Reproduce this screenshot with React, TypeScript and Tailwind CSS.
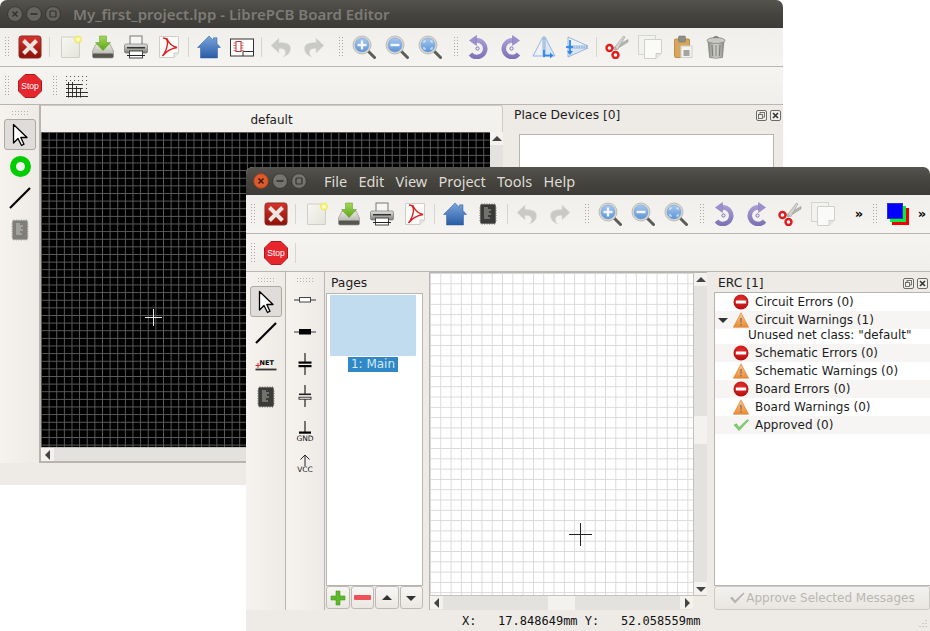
import React from "react";

type P = { children?: React.ReactNode; className?: string };

const Svg = ({ children, s = 24, className = "" }: P & { s?: number }) => (
  <svg width={s} height={s} viewBox="0 0 24 24" className={"block shrink-0 " + className}>
    {children}
  </svg>
);

const Defs = () => (
  <svg width="0" height="0" className="absolute">
    <defs>
      <linearGradient id="gRed" x1="0" y1="0" x2="0" y2="1"><stop offset="0" stopColor="#d8342c" /><stop offset="1" stopColor="#8c1008" /></linearGradient>
      <linearGradient id="gPage" x1="0" y1="0" x2="1" y2="1"><stop offset="0" stopColor="#f8f8f2" /><stop offset="1" stopColor="#e4e4dc" /></linearGradient>
      <linearGradient id="gHome" x1="0" y1="0" x2="0" y2="1"><stop offset="0" stopColor="#7aa6dc" /><stop offset="1" stopColor="#2a5ca6" /></linearGradient>
      <linearGradient id="gLens" x1="0" y1="0" x2="0" y2="1"><stop offset="0" stopColor="#a8c8ee" /><stop offset="1" stopColor="#5c94d8" /></linearGradient>
      <linearGradient id="gDisk" x1="0" y1="0" x2="0" y2="1"><stop offset="0" stopColor="#e8e8e0" /><stop offset="1" stopColor="#a8a8a0" /></linearGradient>
      <linearGradient id="gArrow" x1="0" y1="0" x2="0" y2="1"><stop offset="0" stopColor="#a4d85c" /><stop offset="1" stopColor="#5aa612" /></linearGradient>
      <linearGradient id="gPrint" x1="0" y1="0" x2="0" y2="1"><stop offset="0" stopColor="#e4e4e0" /><stop offset="1" stopColor="#7c7c78" /></linearGradient>
      <linearGradient id="gPurple" gradientUnits="userSpaceOnUse" x1="0" y1="3" x2="0" y2="24"><stop offset="0" stopColor="#a9a0d6" /><stop offset="1" stopColor="#7a70b4" /></linearGradient>
      <linearGradient id="gTrash" x1="0" y1="0" x2="1" y2="0"><stop offset="0" stopColor="#8c8c88" /><stop offset="0.5" stopColor="#d4d4d0" /><stop offset="1" stopColor="#8c8c88" /></linearGradient>
      <linearGradient id="gWarn" x1="0" y1="0" x2="0" y2="1"><stop offset="0" stopColor="#f8c890" /><stop offset="1" stopColor="#ea8a34" /></linearGradient>
      <radialGradient id="gErr" cx="0.5" cy="0.35" r="0.7"><stop offset="0" stopColor="#e83030" /><stop offset="1" stopColor="#b00a0a" /></radialGradient>
    </defs>
  </svg>
);

const Close = () => (
  <Svg>
    <rect x="1" y="1" width="22" height="22" rx="2.5" fill="url(#gRed)" stroke="#8a2a20" />
    <path d="M5.5 5.5L18.5 18.5M18.5 5.5L5.5 18.5" stroke="#ece6e2" strokeWidth="4" />
  </Svg>
);
const NewDoc = () => (
  <Svg>
    <rect x="3.5" y="2" width="18" height="20.5" rx="0.5" fill="url(#gPage)" stroke="#cfcfc6" />
    <circle cx="20" cy="4.5" r="3.4" fill="#fff57a" stroke="#e8e860" />
    <circle cx="20" cy="4.5" r="1.6" fill="#ffffe0" />
  </Svg>
);
const SaveIco = () => (
  <Svg>
    <path d="M1.5 16L5 9H19L22.5 16V21Q22.5 23 21 23H3Q1.5 23 1.5 21Z" fill="url(#gDisk)" stroke="#8c8c84" strokeWidth="0.6" />
    <rect x="1.8" y="18.5" width="20.4" height="4.2" rx="1" fill="#55564f" />
    <path d="M8.5 1H15.5V7.5H19.5L12 15.5L4.5 7.5H8.5Z" fill="url(#gArrow)" stroke="#5c9a20" strokeWidth="0.5" />
  </Svg>
);
const PrintIco = () => (
  <Svg>
    <rect x="6" y="1" width="12" height="9" fill="#f6f6f4" stroke="#777" />
    <rect x="0.5" y="9" width="23" height="9" rx="1.5" fill="url(#gPrint)" stroke="#666" strokeWidth="0.6" />
    <rect x="3" y="12" width="18" height="1.5" fill="#333" />
    <rect x="5.5" y="16" width="13" height="7" fill="#fff" stroke="#444" />
    <rect x="3" y="20" width="18" height="1" fill="#222" />
  </Svg>
);
const PdfIco = () => (
  <Svg>
    <path d="M2.5 1.5H21.5V18L17 22.5H2.5Z" fill="#fbfbf9" stroke="#cfcfca" />
    <path d="M17 22.5V18H21.5" fill="#e6e6e2" stroke="#cfcfca" />
    <path d="M6 3Q11 3 10.5 9Q9.5 16 5.5 21Q11 14 20 12.5Q13 11 9.5 3" fill="none" stroke="#dc2020" strokeWidth="1.4" />
  </Svg>
);
const HomeIco = () => (
  <Svg>
    <path d="M12 1L16.5 5.2V2.8H20V8.5L23.5 12.5H20.5V23H3.5V12.5H0.5Z" fill="url(#gHome)" stroke="#2c5a9c" strokeWidth="0.5" />
  </Svg>
);
const BoardIco = () => (
  <Svg>
    <rect x="0.5" y="4" width="23" height="17" fill="#fff" stroke="#333" />
    <path d="M13 21V16.5H23.5" fill="none" stroke="#333" />
    <rect x="6" y="6.5" width="5" height="10" fill="#fff" stroke="#b33" />
    <path d="M3.5 8H6M3.5 10.5H6M3.5 13H6M3.5 15.5H6M11 8H13.5M11 10.5H13.5M11 13H13.5M11 15.5H13.5" stroke="#c44" strokeWidth="0.8" />
  </Svg>
);
const ChipIco = ({ gray }: { gray?: boolean }) => {
  const body = gray ? "#7e7e7a" : "#3a3b38";
  const pin = gray ? "#c4c4c0" : "#9a9a96";
  const txt = gray ? "#c4c4c0" : "#a8a8a4";
  const pins = [5, 7.5, 10, 12.5, 15, 17.5];
  return (
    <Svg>
      {pins.map((v) => (
        <g key={v}>
          <path d={`M3 ${v + 1}H21`} stroke={pin} strokeWidth="0.8" />
          <path d={`M${v + 1} 1V23`} stroke={pin} strokeWidth="0.8" />
        </g>
      ))}
      <rect x="4.5" y="2.5" width="15" height="19" rx="1" fill={body} stroke={gray ? "#9a9a96" : "#555"} strokeWidth="0.6" />
      <path d="M8 6H12M8 8H15M8 10H13M8 12H15M8 14H12M8 16H14" stroke={txt} strokeWidth="1" />
    </Svg>
  );
};
const UndoIco = ({ flip }: { flip?: boolean }) => (
  <Svg>
    <g transform={flip ? "translate(24,0) scale(-1,1)" : undefined}>
      <path d="M10 3L2 10.5L10 18V13.5C15 13.5 16.5 15 16.5 17.5C16.5 19.5 15.5 21 14 22C19.5 20.5 21.5 17 21.5 13.5C21.5 9 17.5 7.5 10 7.5Z" fill="#c9c9c5" stroke="#dcdcd8" strokeWidth="0.5" />
    </g>
  </Svg>
);
const Zoom = ({ kind }: { kind: "in" | "out" | "all" }) => (
  <Svg>
    <path d="M15.5 15.5L22.5 22.5" stroke="#5c5c58" strokeWidth="3" strokeLinecap="round" />
    <circle cx="10" cy="10" r="9" fill="#dadad4" stroke="#bcbcb6" />
    <circle cx="10" cy="10" r="7" fill="url(#gLens)" stroke="#6f9ad2" strokeWidth="0.5" />
    {kind !== "all" && <path d="M5.5 10H14.5" stroke="#f4f8fc" strokeWidth="2.4" />}
    {kind === "in" && <path d="M10 5.5V14.5" stroke="#f4f8fc" strokeWidth="2.4" />}
    {kind === "all" && (
      <path d="M6 8V6H8M12 6H14V8M14 12V14H12M8 14H6V12" fill="none" stroke="#dbe8f8" strokeWidth="1.2" />
    )}
  </Svg>
);
const RotIco = ({ cw }: { cw?: boolean }) => (
  <Svg>
    <g transform={cw ? "translate(24,0) scale(-1,1)" : undefined}>
      <path d="M9.5 5.5A8.3 8.3 0 1 1 4.5 19" fill="none" stroke="url(#gPurple)" strokeWidth="4.6" />
      <path d="M3.5 5.5L10.5 0.5V10.5Z" fill="#9a90cc" stroke="#8278bc" strokeWidth="0.5" />
      <circle cx="11.5" cy="13.5" r="1.6" fill="none" stroke="#7a70b4" strokeWidth="1" />
    </g>
  </Svg>
);
const MirrorIco = () => (
  <Svg>
    <path d="M11 2L1 21H11Z" fill="#eef2f6" stroke="#8cb0dc" strokeWidth="0.9" />
    <path d="M13 2L23 21H13Z" fill="#dbe6f2" stroke="#8cb0dc" strokeWidth="0.9" />
    <path d="M12 1V23" stroke="#5c98e0" strokeWidth="0.8" strokeDasharray="1.5 1" />
    <path d="M12 20.5H19" stroke="#2e88ea" strokeWidth="1.8" />
    <path d="M18 17.5L21.5 20.5L18 23.5Z" fill="#2e88ea" />
    <path d="M12 15V22" stroke="#2e88ea" strokeWidth="1.8" />
  </Svg>
);
const FlipIco = () => (
  <Svg>
    <path d="M3 2L23 11H3Z" fill="#eef2f6" stroke="#8cb0dc" strokeWidth="0.9" />
    <path d="M3 13L23 13L3 22Z" fill="#dbe6f2" stroke="#8cb0dc" strokeWidth="0.9" />
    <path d="M1 12H23" stroke="#5c98e0" strokeWidth="0.8" strokeDasharray="1.5 1" />
    <path d="M5 5V17" stroke="#2e88ea" strokeWidth="1.8" />
    <path d="M2 16L5 20L8 16Z" fill="#2e88ea" />
    <path d="M1 12H8" stroke="#2e88ea" strokeWidth="1.8" />
  </Svg>
);
const CutIco = () => (
  <Svg>
    <path d="M8 13L23 4.5L23 7L10 15Z" fill="#b8b8b4" stroke="#8c8c88" strokeWidth="0.5" />
    <path d="M10 12L18.5 1L20 2L12.5 15Z" fill="#d4d4d0" stroke="#8c8c88" strokeWidth="0.5" />
    <circle cx="4.5" cy="13" r="3" fill="#fff" stroke="#e01c1c" strokeWidth="2.4" />
    <circle cx="10.5" cy="20" r="3" fill="#fff" stroke="#e01c1c" strokeWidth="2.4" />
  </Svg>
);
const CopyIco = () => (
  <Svg>
    <rect x="0.5" y="0.5" width="17" height="19" fill="#f2f2ee" stroke="#d4d4d0" />
    <path d="M6.5 4.5H23.5V18L18 23.5H6.5Z" fill="#fafaf8" stroke="#cfcfcb" />
    <path d="M18 23.5V18.5H23.5" fill="#e4e4e0" stroke="#cfcfcb" />
  </Svg>
);
const PasteIco = () => (
  <Svg>
    <rect x="3.5" y="4" width="15" height="18.5" rx="1" fill="#d6a65e" stroke="#bb904c" />
    <rect x="7.5" y="1" width="7" height="6" rx="1" fill="#8e8e88" stroke="#6e6e68" strokeWidth="0.5" />
    <rect x="10" y="11" width="11" height="11.5" fill="#f2f2ee" stroke="#cfcfcb" />
    <rect x="12.5" y="15" width="6" height="6" fill="#a4a4a0" />
  </Svg>
);
const TrashIco = () => (
  <Svg>
    <path d="M4 6H20L18.5 22.5Q12 24 5.5 22.5Z" fill="url(#gTrash)" stroke="#77776f" strokeWidth="0.6" />
    <ellipse cx="12" cy="5.5" rx="9" ry="3" fill="#c8c8c4" stroke="#7c7c78" strokeWidth="0.7" />
    <path d="M9.5 3Q12 0.5 14.5 3" fill="none" stroke="#7c7c78" strokeWidth="1.2" />
    <path d="M8 10L8.7 21M12 10V21.5M16 10L15.3 21" stroke="#77776f" strokeWidth="0.9" />
  </Svg>
);
const StopIco = () => (
  <Svg>
    <polygon points="7,0.5 17,0.5 23.5,7 23.5,17 17,23.5 7,23.5 0.5,17 0.5,7" fill="#e6262c" stroke="#ad1c1c" />
    <text x="12" y="15" textAnchor="middle" fill="#fff" fontSize="8.6" fontFamily="'Liberation Sans',sans-serif">Stop</text>
  </Svg>
);
const GridIco = () => {
  const dots: React.ReactNode[] = [];
  for (let x = 0; x < 6; x++)
    for (let y = 0; y < 6; y++)
      dots.push(<rect key={`${x}-${y}`} x={1 + x * 4} y={2 + y * 4} width="1" height="1" fill="#555" />);
  return (
    <Svg>
      {dots}
      <path d="M1 10.5H17M1 14.5H17M1 18.5H23M1 22.5H23M3.5 8V23.5M7.5 8V23.5M11.5 12V23.5M15.5 14V23.5" stroke="#222" strokeWidth="0.9" fill="none" />
    </Svg>
  );
};
const Layers = () => (
  <div className="relative w-[22px] h-[22px]">
    <div className="absolute left-[5px] top-[5px] w-[17px] h-[17px] bg-[#f00000]" />
    <div className="absolute left-[3px] top-[3px] w-[16px] h-[16px] bg-[#00f040]" />
    <div className="absolute left-0 top-0 w-[16px] h-[16px] bg-[#0000ff] border border-[#3030c0]" />
  </div>
);
const CursorIco = () => (
  <Svg>
    <path d="M5.5 1.5V20L10 15.5L13.5 22.5L16 21.2L12.8 14.5H19Z" fill="#fff" stroke="#000" strokeWidth="1.3" strokeLinejoin="round" />
  </Svg>
);
const WireIco = () => (
  <Svg>
    <path d="M2 22L22 2" stroke="#000" strokeWidth="2.2" />
  </Svg>
);
const NetIco = () => (
  <div className="relative w-[24px] h-[24px]">
    <svg width="24" height="24" viewBox="0 0 24 24" className="absolute inset-0">
      <path d="M1.5 16.5H22.5" stroke="#333" strokeWidth="1.8" />
      <path d="M1.5 12.5H6.5M4 10V15" stroke="#e8202c" strokeWidth="1" />
    </svg>
    <span className="absolute left-[6px] top-[5px] font-['DejaVu_Sans',sans-serif] font-bold text-[6.5px] leading-[10px] text-black">NET</span>
  </div>
);
const ResIco = ({ fill }: { fill?: boolean }) => (
  <Svg>
    <path d="M1 12H23" stroke="#333" strokeWidth="1" />
    <rect x="6.5" y="9.5" width="11" height="4.5" fill={fill ? "#000" : "#fff"} stroke={fill ? "#000" : "#444"} />
  </Svg>
);
const CapIco = ({ pol }: { pol?: boolean }) => (
  <Svg>
    <path d="M12 1V10M12 14V23" stroke="#222" strokeWidth="1.2" />
    {pol ? (
      <>
        <rect x="6" y="9.5" width="12" height="1.6" fill="#222" />
        <rect x="6" y="13.2" width="12" height="2" fill="#fff" stroke="#222" strokeWidth="0.9" />
      </>
    ) : (
      <>
        <rect x="5.5" y="9.5" width="13" height="2.2" fill="#000" />
        <rect x="5.5" y="13" width="13" height="2.2" fill="#000" />
      </>
    )}
  </Svg>
);
const GndIco = () => (
  <div className="flex flex-col items-center">
    <svg width="14" height="14" viewBox="0 0 14 14" className="block">
      <path d="M7 0V11" stroke="#222" strokeWidth="1.2" />
      <rect x="1" y="10.5" width="12" height="2.2" fill="#000" />
    </svg>
    <span className="font-['DejaVu_Sans',sans-serif] text-[7.5px] leading-[8px] text-[#111]">GND</span>
  </div>
);
const VccIco = () => (
  <div className="flex flex-col items-center">
    <svg width="12" height="12" viewBox="0 0 12 12" className="block">
      <path d="M6 12V1M1.5 5.5L6 1L10.5 5.5" stroke="#222" strokeWidth="1" fill="none" />
    </svg>
    <span className="font-['DejaVu_Sans',sans-serif] text-[7.5px] leading-[7px] text-[#111]">VCC</span>
  </div>
);
const DockBtns = () => (
  <div className="flex gap-[3px] items-center">
    <svg width="11" height="11" viewBox="0 0 11 11" className="block">
      <rect x="0.5" y="0.5" width="10" height="10" rx="1.5" fill="#f2f0ec" stroke="#6a6a66" />
      <rect x="4" y="2.5" width="4.5" height="4.5" fill="none" stroke="#55554f" strokeWidth="0.8" />
      <rect x="2.5" y="4.5" width="4" height="4" fill="#f2f0ec" stroke="#55554f" strokeWidth="0.8" />
    </svg>
    <svg width="11" height="11" viewBox="0 0 11 11" className="block">
      <rect x="0.5" y="0.5" width="10" height="10" rx="1.5" fill="#f2f0ec" stroke="#6a6a66" />
      <path d="M3 3L8 8M8 3L3 8" stroke="#33332f" strokeWidth="1.6" />
    </svg>
  </div>
);
const ErrIco = () => (
  <svg width="16" height="16" viewBox="0 0 16 16" className="block">
    <circle cx="8" cy="8" r="7.5" fill="url(#gErr)" />
    <rect x="2.8" y="6.5" width="10.4" height="3" fill="#fff" />
  </svg>
);
const WarnIco = () => (
  <svg width="16" height="16" viewBox="0 0 16 16" className="block">
    <path d="M8 0.8L15.6 15.2H0.4Z" fill="url(#gWarn)" stroke="#d88838" strokeWidth="0.7" />
    <path d="M7.2 6H8.8L8.5 11H7.5ZM7.2 12H8.8V13.6H7.2Z" fill="#8c7460" />
  </svg>
);
const OkIco = () => (
  <svg width="16" height="14" viewBox="0 0 16 14" className="block">
    <path d="M1 7L3.5 5.8L6 9.5L14.5 1.5L15.5 2.5L6 12.5Z" fill="#80d070" stroke="#5cb050" strokeWidth="0.6" />
  </svg>
);

const GripV = ({ className = "" }: P) => {
  const d: React.ReactNode[] = [];
  for (let i = 0; i < 7; i++)
    for (let j = 0; j < 2; j++)
      d.push(<rect key={`${i}${j}`} x={j * 3} y={i * 3} width="1" height="1" fill="#a9a6a1" />);
  return <svg width="4" height="20" className={"block self-center shrink-0 " + className}>{d}</svg>;
};
const GripH = ({ className = "" }: P) => {
  const d: React.ReactNode[] = [];
  for (let i = 0; i < 6; i++)
    for (let j = 0; j < 2; j++)
      d.push(<rect key={`${i}${j}`} x={i * 3} y={j * 3} width="1" height="1" fill="#b4b1ac" />);
  return <svg width="16" height="4" className={"block mx-auto shrink-0 " + className}>{d}</svg>;
};
const Tool = ({ children, className = "" }: P) => (
  <div className={"w-[33px] flex items-center justify-center shrink-0 " + className}>{children}</div>
);
const Sep = ({ className = "w-[7px]" }: P) => (
  <div className={"flex items-center justify-center shrink-0 " + className}>
    <div className="w-px h-[20px] bg-[#d8d5d0]" />
  </div>
);
const Bar = ({ children }: P) => (
  <div className="h-[39px] shrink-0 flex border-b border-[#b9b5b1] pl-[5px] bg-gradient-to-b from-[#f1efeb] to-[#f6f4f0]">
    {children}
  </div>
);
const Bar2 = ({ children }: P) => (
  <div className="h-[38px] shrink-0 flex border-b border-[#b9b5b1] pl-[5px] bg-gradient-to-b from-[#f6f4f0] to-[#f1efeb]">
    {children}
  </div>
);
const CommonLeft = ({ chip }: { chip: React.ReactNode }) => (
  <>
    <GripV />
    <Tool className="ml-[4px]"><Close /></Tool>
    <Sep />
    <Tool><NewDoc /></Tool>
    <Tool><SaveIco /></Tool>
    <Tool><PrintIco /></Tool>
    <Tool><PdfIco /></Tool>
    <Sep />
    <Tool><HomeIco /></Tool>
    <Tool>{chip}</Tool>
    <Sep className="w-[6px]" />
    <Tool><UndoIco /></Tool>
    <Tool><UndoIco flip /></Tool>
    <GripV className="ml-[9px]" />
    <Tool className="ml-[4px]"><Zoom kind="in" /></Tool>
    <Tool><Zoom kind="out" /></Tool>
    <Tool><Zoom kind="all" /></Tool>
    <GripV className="ml-[8px]" />
    <Tool className="ml-[3px]"><RotIco /></Tool>
    <Tool><RotIco cw /></Tool>
  </>
);
const Titlebtn = ({ kind, active, dim }: { kind: "x" | "-" | "o"; active?: boolean; dim?: boolean }) => (
  <svg width="16" height="16" viewBox="0 0 16 16" className="block">
    <circle cx="8" cy="8" r="7.4" fill={active ? "#dd5a2c" : dim ? "#66645f" : "#75736d"} stroke={active ? "#8c3a1c" : "#33322e"} strokeWidth="0.8" />
    {kind === "x" && <path d="M5.5 5.5L10.5 10.5M10.5 5.5L5.5 10.5" stroke={active ? "#41190a" : "#33322e"} strokeWidth="1.5" />}
    {kind === "-" && <path d="M4.5 8H11.5" stroke="#33322e" strokeWidth="1.6" />}
    {kind === "o" && <rect x="5" y="5" width="6" height="6" rx="1" fill="none" stroke="#33322e" strokeWidth="1.2" />}
  </svg>
);
const Tri = ({ dir, c = "#444" }: { dir: "u" | "d" | "l" | "r"; c?: string }) => {
  const pts = { u: "0,7 5,2 10,7", d: "0,3 5,8 10,3", l: "7,0 2,5 7,10", r: "3,0 8,5 3,10" }[dir];
  return (
    <svg width="10" height="10" viewBox="0 0 10 10" className="block"><polygon points={pts} fill={c} /></svg>
  );
};
const ArrowBtn = ({ dir, className = "" }: { dir: "u" | "d" | "l" | "r"; className?: string }) => (
  <div className={"w-[13px] h-[13px] bg-[#f4f2ef] flex items-center justify-center shrink-0 " + className}>
    <Tri dir={dir} />
  </div>
);

const Title = ({ className = "", children }: P) => (
  <div className={"rounded-t-[7px] bg-gradient-to-b from-[#55534d] via-[#45443f] to-[#3c3b37] shrink-0 " + className}>{children}</div>
);
const Selected = ({ children }: P) => (
  <div className="w-[32px] h-[31px] mx-auto rounded-[3px] bg-[#e0dcd9] border border-[#aca8a3] flex items-center justify-center">{children}</div>
);

const BackWindow = () => (
  <div className="absolute left-0 top-0 w-[783px] h-[485px] flex flex-col bg-[#eeebe7] rounded-t-[7px] font-['DejaVu_Sans',sans-serif] text-[12px] text-[#1c1c1c]">
    <Title className="h-[28px] flex items-center pl-[7px]">
      <div className="flex gap-[3px] items-center">
        <Titlebtn kind="x" dim /><Titlebtn kind="-" dim /><Titlebtn kind="o" dim />
      </div>
      <span className="ml-[12px] font-['Noto_Sans',sans-serif] font-semibold text-[15px] text-[#7d7b76] whitespace-nowrap">My_first_project.lpp - LibrePCB Board Editor</span>
    </Title>
    <Bar>
      <CommonLeft chip={<BoardIco />} />
      <Tool><MirrorIco /></Tool>
      <Tool><FlipIco /></Tool>
      <Sep />
      <Tool><CutIco /></Tool>
      <Tool><CopyIco /></Tool>
      <Tool><PasteIco /></Tool>
      <Tool><TrashIco /></Tool>
    </Bar>
    <Bar2>
      <GripV />
      <Tool className="ml-[4px]"><StopIco /></Tool>
      <GripV className="ml-[7px]" />
      <Tool className="ml-[3px]"><GridIco /></Tool>
    </Bar2>
    <div className="flex h-[358px] shrink-0">
      <div className="w-[39px] pl-px pt-[6px] flex flex-col shrink-0 bg-gradient-to-r from-[#f6f3ef] to-[#eeebe7]">
        <GripH />
        <div className="mt-[4px]"><Selected><CursorIco /></Selected></div>
        <div className="mt-[6px] flex flex-col items-center">
          <div className="w-[21px] h-[21px] rounded-full border-[6px] border-[#00cc00] bg-[#f4f2ee]" />
          <div className="mt-[9px]"><WireIco /></div>
          <div className="mt-[8px]"><ChipIco gray /></div>
        </div>
      </div>
      <div className="w-[464px] shrink-0 flex flex-col border-l-2 border-b-2 border-[#b8b4af]">
        <div className="h-[27px] shrink-0 flex items-center justify-center pt-[2px] bg-gradient-to-b from-[#f5f3f0] to-[#f2f0ec] border-t border-r border-[#cfccc7] rounded-tr-[3px]">default</div>
        <div className="flex flex-1 min-h-0">
          <div className="relative flex-1 bg-black bg-[linear-gradient(to_right,#5c5c5c_1px,transparent_1px),linear-gradient(to_bottom,#5c5c5c_1px,transparent_1px)] bg-[size:7.63px_7.63px]">
            <svg width="17" height="17" className="absolute left-[104px] top-[177px]"><path d="M8.5 0V17M0 8.5H17" stroke="#e8e8e8" strokeWidth="1" /></svg>
          </div>
          <div className="w-[13px] flex flex-col bg-[#e3e2de] shrink-0"><ArrowBtn dir="u" /></div>
        </div>
        <div className="h-[14px] shrink-0 flex bg-[#e3e2de] border-t border-[#c4c1bc]"><ArrowBtn dir="l" /></div>
      </div>
      <div className="flex-1 flex flex-col pl-[11px] pr-[2px]">
        <div className="h-[29px] shrink-0 flex items-center justify-between pb-[8px] text-[12.3px]">
          <span>Place Devices [0]</span>
          <DockBtns />
        </div>
        <div className="ml-[5px] mr-[7px] flex-1 bg-white border border-[#b8b4af]" />
      </div>
    </div>
  </div>
);

const ErcRow = ({ icon, text, alt, arrow }: { icon: React.ReactNode; text: string; alt?: boolean; arrow?: boolean }) => (
  <div className={"h-[18px] flex items-center relative " + (alt ? "bg-[#f6f5f3]" : "bg-white")}>
    {arrow && <div className="absolute left-[3px] top-[4px]"><Tri dir="d" c="#333" /></div>}
    <div className="absolute left-[18px] top-[1px] w-[16px] h-[16px] flex items-center justify-center">{icon}</div>
    <span className="pl-[40px] whitespace-nowrap">{text}</span>
  </div>
);

const PageBtn = ({ children }: P) => (
  <div className="w-[24px] h-[23px] rounded-[3px] border border-[#bdb9b4] bg-gradient-to-b from-[#f8f6f3] to-[#ebe8e4] flex items-center justify-center">{children}</div>
);

const FrontWindow = () => (
  <div className="absolute left-[246px] top-[167px] w-[684px] h-[464px] flex flex-col bg-[#eeebe7] rounded-t-[7px] font-['DejaVu_Sans',sans-serif] text-[12px] text-[#1c1c1c]">
    <Title className="h-[28px] flex items-center pl-[7px]">
      <div className="flex gap-[3px] items-center">
        <Titlebtn kind="x" active /><Titlebtn kind="-" /><Titlebtn kind="o" />
      </div>
      <div className="ml-[17px] pt-px flex gap-[11.2px] font-['Noto_Sans',sans-serif] text-[14.5px] text-[#dfdbd2]">
        <span>File</span><span>Edit</span><span>View</span><span>Project</span><span>Tools</span><span>Help</span>
      </div>
    </Title>
    <Bar>
      <CommonLeft chip={<ChipIco />} />
      <Tool><CutIco /></Tool>
      <Tool><CopyIco /></Tool>
      <span className="ml-[12px] w-[16px] self-center text-center font-bold text-[13px] text-black">»</span>
      <GripV className="ml-[6px]" />
      <div className="ml-[5px] w-[32px] flex items-center justify-center"><Layers /></div>
      <span className="w-[16px] self-center text-center font-bold text-[13px] text-black">»</span>
    </Bar>
    <Bar2>
      <GripV />
      <Tool className="ml-[4px]"><StopIco /></Tool>
      <Sep />
    </Bar2>
    <div className="flex flex-1 min-h-0">
      <div className="w-[40px] shrink-0 pt-[6px] flex flex-col items-stretch border-r border-[#b9b5b1] bg-gradient-to-r from-[#f6f3ef] to-[#eeebe7]">
        <GripH />
        <div className="mt-[4px]"><Selected><CursorIco /></Selected></div>
        <div className="mt-[4px] flex flex-col items-center gap-[8px]">
          <WireIco /><NetIco /><ChipIco />
        </div>
      </div>
      <div className="w-[39px] shrink-0 pt-[6px] flex flex-col items-center border-r border-[#b9b5b1] bg-gradient-to-r from-[#f6f3ef] to-[#eeebe7]">
        <GripH />
        <div className="mt-[6px] flex flex-col items-center gap-[8px]">
          <ResIco /><ResIco fill /><CapIco /><CapIco pol />
        </div>
        <div className="mt-[13px]"><GndIco /></div>
        <div className="mt-[11px]"><VccIco /></div>
      </div>
      <div className="w-[104px] shrink-0 flex flex-col pl-[1px] pr-[6px]">
        <div className="h-[21px] shrink-0 flex items-center pl-[5px] pt-[1px] text-[12.3px]">Pages</div>
        <div className="flex-1 bg-white border border-[#b8b4af] flex flex-col items-center pt-[1px] pr-[3px] min-h-0">
          <div className="w-[86px] h-[61px] bg-[#c1dcee] shrink-0" />
          <div className="mt-[1px] h-[15px] px-[3px] bg-[#3088c6] text-[#d4e8f6] leading-[15px]">1: Main</div>
        </div>
        <div className="h-[24px] shrink-0 flex gap-px">
          <PageBtn>
            <svg width="18" height="18" viewBox="0 0 18 18"><path d="M7 2H11V7H16V11H11V16H7V11H2V7H7Z" fill="#5cb82c" stroke="#4a9a20" strokeWidth="0.6" /></svg>
          </PageBtn>
          <PageBtn><div className="w-[17px] h-[5px] rounded-[1px] bg-[#f0505a]" /></PageBtn>
          <PageBtn><Tri dir="u" c="#333" /></PageBtn>
          <PageBtn><Tri dir="d" c="#333" /></PageBtn>
        </div>
      </div>
      <div className="w-[278px] shrink-0 flex flex-col border-l border-t border-[#b8b4af]">
        <div className="flex flex-1 min-h-0">
          <div className="relative flex-1 bg-white bg-[linear-gradient(to_right,#d9d9d9_1px,transparent_1px),linear-gradient(to_bottom,#d9d9d9_1px,transparent_1px)] bg-[size:10.3px_10.3px]">
            <svg width="23" height="23" className="absolute left-[139px] top-[250px]"><path d="M11.5 0V23M0 11.5H23" stroke="#222" strokeWidth="1" /></svg>
          </div>
          <div className="w-[14px] shrink-0 flex flex-col bg-[#e3e2de] border-l border-[#c4c1bc]">
            <ArrowBtn dir="u" />
            <div className="flex-1 flex flex-col">
              <div className="h-[130px]" />
              <div className="h-[28px] bg-[#f4f2ef]" />
            </div>
            <ArrowBtn dir="d" />
          </div>
        </div>
        <div className="h-[15px] shrink-0 flex bg-[#e3e2de] border-t border-[#c4c1bc]">
          <ArrowBtn dir="l" />
          <div className="ml-[105px] w-[27px] bg-[#f4f2ef]" />
          <div className="flex-1" />
          <ArrowBtn dir="r" />
          <div className="w-[14px] bg-[#eeebe7]" />
        </div>
      </div>
      <div className="flex-1 flex flex-col pl-[7px]">
        <div className="h-[20px] shrink-0 flex items-center justify-between pl-[4px] pr-[2px] pt-[2px] text-[12.3px]">
          <span>ERC [1]</span>
          <DockBtns />
        </div>
        <div className="flex-1 min-h-0 bg-white border border-[#b8b4af] border-r-0">
          <ErcRow icon={<ErrIco />} text="Circuit Errors (0)" />
          <ErcRow icon={<WarnIco />} text="Circuit Warnings (1)" alt arrow />
          <div className="h-[15px] leading-[13px] pl-[33px] whitespace-nowrap">Unused net class: "default"</div>
          <ErcRow icon={<ErrIco />} text="Schematic Errors (0)" alt />
          <ErcRow icon={<WarnIco />} text="Schematic Warnings (0)" />
          <ErcRow icon={<ErrIco />} text="Board Errors (0)" alt />
          <ErcRow icon={<WarnIco />} text="Board Warnings (0)" />
          <ErcRow icon={<OkIco />} text="Approved (0)" alt />
        </div>
        <div className="h-[24px] shrink-0 rounded-[3px] border border-[#cdc9c4] bg-gradient-to-b from-[#f3f1ee] to-[#e9e6e2] flex items-center justify-center gap-[1px] text-[#b9b7b3] text-[12px]">
          <svg width="16" height="14" viewBox="0 0 16 14"><path d="M1 7L3.5 5.8L6 9.5L14.5 1.5L15.5 2.5L6 12.5Z" fill="#b5b3af" /></svg>
          <span>Approve Selected Messages</span>
        </div>
      </div>
    </div>
    <div className="h-[21px] shrink-0 relative flex items-center pl-[216px] font-['DejaVu_Sans_Mono',monospace] text-[12px] text-[#111]">
      <span className="whitespace-pre">{"X:   17.848649mm Y:   52.058559mm"}</span>
      <svg width="10" height="10" className="absolute right-[2px] bottom-[2px]">
        <path d="M8 1v1M5 4v1M8 4v1M2 7v1M5 7v1M8 7v1" stroke="#aaa" strokeWidth="1" />
      </svg>
    </div>
  </div>
);

export default function App() {
  return (
    <div className="relative w-[930px] h-[631px] overflow-hidden bg-white">
      <Defs />
      <BackWindow />
      <FrontWindow />
    </div>
  );
}
